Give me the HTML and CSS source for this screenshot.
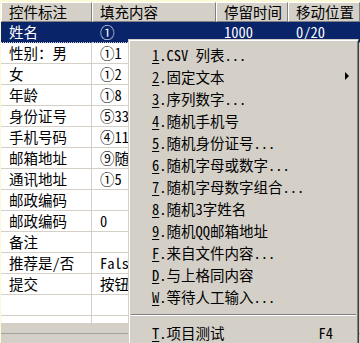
FILE: index.html
```html
<!DOCTYPE html>
<html lang="zh-CN">
<head>
  <meta charset="UTF-8">
  <meta name="viewport" content="width=device-width, initial-scale=1.0">
  <title>控件填充</title>
  <link rel="stylesheet" href="styles.css">
</head>
<body>
  <div class="window">
    <div class="grid">
      <div class="row head">
        <div class="cell">控件标注</div>
        <div class="cell">填充内容</div>
        <div class="cell">停留时间</div>
        <div class="cell">移动位置</div>
      </div>
      <div class="row selected">
        <div class="cell">姓名</div>
        <div class="cell">①</div>
        <div class="cell">1000</div>
        <div class="cell">0/20</div>
      </div>
      <div class="row"><div class="cell">性别：男</div><div class="cell">①1</div><div class="cell"></div><div class="cell"></div></div>
      <div class="row"><div class="cell">女</div><div class="cell">①2</div><div class="cell"></div><div class="cell"></div></div>
      <div class="row"><div class="cell">年龄</div><div class="cell">①8</div><div class="cell"></div><div class="cell"></div></div>
      <div class="row"><div class="cell">身份证号</div><div class="cell">⑤33</div><div class="cell"></div><div class="cell"></div></div>
      <div class="row"><div class="cell">手机号码</div><div class="cell">④11</div><div class="cell"></div><div class="cell"></div></div>
      <div class="row"><div class="cell">邮箱地址</div><div class="cell">⑨随机</div><div class="cell"></div><div class="cell"></div></div>
      <div class="row"><div class="cell">通讯地址</div><div class="cell">①5</div><div class="cell"></div><div class="cell"></div></div>
      <div class="row"><div class="cell">邮政编码</div><div class="cell"></div><div class="cell"></div><div class="cell"></div></div>
      <div class="row"><div class="cell">邮政编码</div><div class="cell">0</div><div class="cell"></div><div class="cell"></div></div>
      <div class="row"><div class="cell">备注</div><div class="cell"></div><div class="cell"></div><div class="cell"></div></div>
      <div class="row"><div class="cell">推荐是/否</div><div class="cell">False</div><div class="cell"></div><div class="cell"></div></div>
      <div class="row"><div class="cell">提交</div><div class="cell">按钮</div><div class="cell"></div><div class="cell"></div></div>
      <div class="row"><div class="cell"></div><div class="cell"></div><div class="cell"></div><div class="cell"></div></div>
      <div class="row"><div class="cell"></div><div class="cell"></div><div class="cell"></div><div class="cell"></div></div>
    </div>
    <div class="status"><div class="status-line"></div></div>

    <!-- 右键菜单 -->
    <div class="menu">
      <div class="item"><span><u>1</u>.CSV 列表...</span></div>
      <div class="item"><span><u>2</u>.固定文本</span><span class="arrow"></span></div>
      <div class="item"><span><u>3</u>.序列数字...</span></div>
      <div class="item"><span><u>4</u>.随机手机号</span></div>
      <div class="item"><span><u>5</u>.随机身份证号...</span></div>
      <div class="item"><span><u>6</u>.随机字母或数字...</span></div>
      <div class="item"><span><u>7</u>.随机字母数字组合...</span></div>
      <div class="item"><span><u>8</u>.随机3字姓名</span></div>
      <div class="item"><span><u>9</u>.随机QQ邮箱地址</span></div>
      <div class="item"><span><u>F</u>.来自文件内容...</span></div>
      <div class="item"><span><u>D</u>.与上格同内容</span></div>
      <div class="item"><span><u>W</u>.等待人工输入...</span></div>
      <div class="sep"></div>
      <div class="item"><span><u>T</u>.项目测试</span><span class="key">F4</span></div>
    </div>
  </div>
</body>
</html>
```

FILE: styles.css
```css
* {
  box-sizing: border-box;
}

body {
  margin: 0;
  overflow: hidden;
  background-color: #fbf9d6;
  font-family: "Noto Sans Mono CJK SC", "Noto Sans CJK SC", sans-serif;
  font-size: 14.5px;
  color: #000000;
}

.window {
  position: relative;
  display: flex;
  flex-direction: column;
  height: 341px;
  margin: 2px 0 0 1px;
  background-color: #d4d0c8;
}

.grid {
  height: 321px;
  overflow: hidden;
  background-color: #ffffff;
}

.row {
  display: grid;
  grid-template-columns: 91px 124px 72px 72px;
  height: 21px;
}

.cell {
  padding-left: 8px;
  line-height: 20px;
  white-space: nowrap;
  overflow: hidden;
  border-right: 1px solid #d4d0c8;
  border-bottom: 1px solid #d4d0c8;
}

.head {
  height: 20px;
  background-color: #d4d0c8;
}

.head .cell {
  padding-left: 7px;
  line-height: 18px;
  border-top: 1px solid #ffffff;
  border-left: 1px solid #ffffff;
  border-right: 1px solid #808080;
  border-bottom: 1px solid #808080;
}

.selected {
  background-color: #0a246a;
  color: #ffffff;
}

.selected .cell {
  border-right-color: #0a246a;
  border-bottom: 1px dotted #c8c8d8;
}

.status {
  flex: 1;
}

.status-line {
  margin-top: 10px;
  border-top: 1px solid #a0a0a0;
}

.menu {
  position: absolute;
  left: 127px;
  top: 37px;
  width: 231px;
  padding: 3px 2px;
  background-color: #d4d0c8;
  border: 1px solid;
  border-color: #d4d0c8 #404040 #404040 #d4d0c8;
  box-shadow: inset 1px 1px #ffffff, inset -1px -1px #808080;
}

.item {
  display: flex;
  align-items: center;
  height: 22px;
  padding: 0 7px 0 21px;
  white-space: nowrap;
}

.item u {
  text-underline-offset: 2px;
}

.arrow {
  margin-left: auto;
  width: 0;
  height: 0;
  border-left: 4px solid #000000;
  border-top: 4px solid transparent;
  border-bottom: 4px solid transparent;
}

.key {
  margin-left: auto;
  margin-right: 16px;
}

.sep {
  margin: 7px 0 5px;
  border-top: 1px solid #808080;
  border-bottom: 1px solid #ffffff;
}
```
